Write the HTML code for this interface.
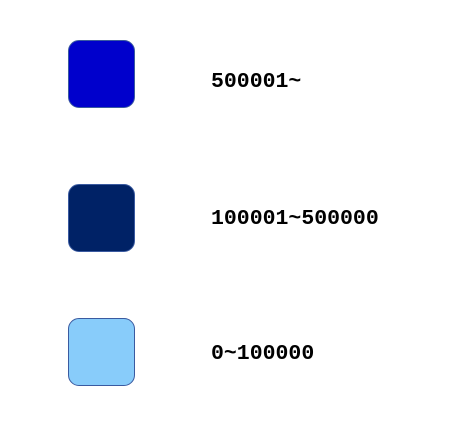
<!DOCTYPE html><html><head><style>
body{margin:0;width:454px;height:432px;background:#fff;position:relative;overflow:hidden}
.b{position:absolute;left:68px;width:67px;height:68px;border-radius:11px;box-sizing:border-box;border:1px solid #3a5aa0}
.t{position:absolute;left:211px;font:bold 21.5px "Liberation Mono",monospace;color:#000;line-height:24px}
</style></head><body>
<div class="b" style="top:40px;background:#0000cc"></div>
<div class="t" style="top:70px">500001~</div>
<div class="b" style="top:184px;background:#002266"></div>
<div class="t" style="top:207px">100001~500000</div>
<div class="b" style="top:318px;background:#88ccfa"></div>
<div class="t" style="top:342px">0~100000</div>
</body></html>
